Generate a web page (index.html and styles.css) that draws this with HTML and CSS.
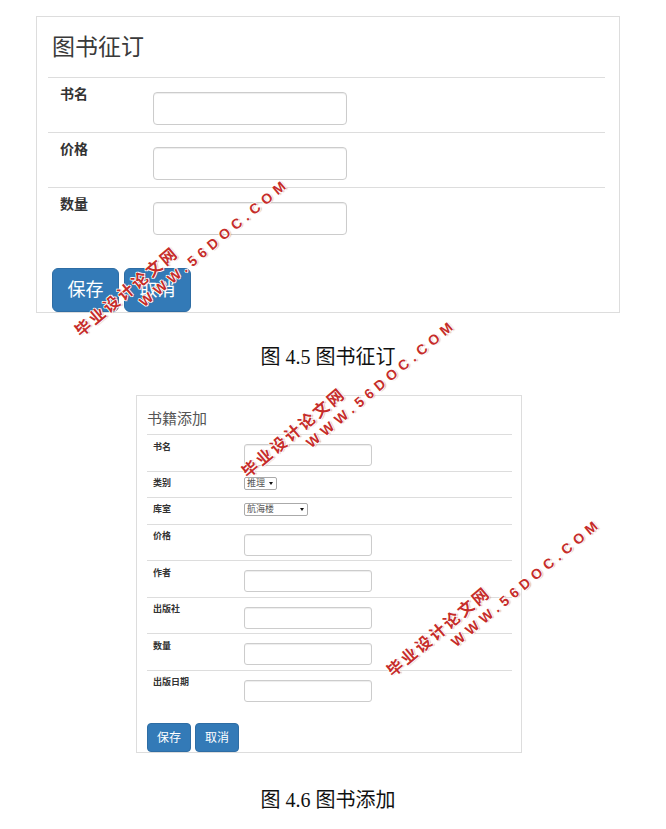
FILE: index.html
```html
<!DOCTYPE html>
<html lang="zh-CN">
<head>
<meta charset="utf-8">
<title>图书征订 / 图书添加</title>
<link rel="stylesheet" href="styles.css">
</head>
<body>
<div class="page">
  <section class="panel lg">
    <h3 class="title">图书征订</h3>
    <div class="row"><div class="label">书名</div><div class="control"><input class="input" type="text"></div></div>
    <div class="row"><div class="label">价格</div><div class="control"><input class="input" type="text"></div></div>
    <div class="row"><div class="label">数量</div><div class="control"><input class="input" type="text"></div></div>
    <div class="actions"><button class="btn" type="button">保存</button><button class="btn" type="button">取消</button></div>
  </section>
  <p class="caption caption1">图 4.5 图书征订</p>

  <section class="panel sm">
    <h3 class="title">书籍添加</h3>
    <div class="row"><div class="label">书名</div><div class="control"><input class="input" type="text"></div></div>
    <div class="row sel"><div class="label">类别</div><div class="control"><div class="select w-short"><span>推理</span><i class="caret"></i></div></div></div>
    <div class="row sel"><div class="label">库室</div><div class="control"><div class="select w-long"><span>航海楼</span><i class="caret"></i></div></div></div>
    <div class="row"><div class="label">价格</div><div class="control"><input class="input" type="text"></div></div>
    <div class="row"><div class="label">作者</div><div class="control"><input class="input" type="text"></div></div>
    <div class="row"><div class="label">出版社</div><div class="control"><input class="input" type="text"></div></div>
    <div class="row"><div class="label">数量</div><div class="control"><input class="input" type="text"></div></div>
    <div class="row"><div class="label">出版日期</div><div class="control"><input class="input" type="text"></div></div>
    <div class="actions"><button class="btn" type="button">保存</button><button class="btn" type="button">取消</button></div>
  </section>
  <p class="caption caption2">图 4.6 图书添加</p>

  <div class="wm wm1"><span class="wm-cn">毕业设计论文网</span><span class="wm-en">WWW.56DOC.COM</span></div>
  <div class="wm wm2"><span class="wm-cn">毕业设计论文网</span><span class="wm-en">WWW.56DOC.COM</span></div>
  <div class="wm wm3"><span class="wm-cn">毕业设计论文网</span><span class="wm-en">WWW.56DOC.COM</span></div>
</div>
</body>
</html>
```
FILE: styles.css
```css
html, body {
  margin: 0;
  padding: 0;
  background: #fff;
}
body {
  font-family: "Liberation Sans", "Noto Sans CJK SC", sans-serif;
  color: #333;
}
.page {
  position: relative;
  width: 656px;
  padding-top: 16px;
  display: flex;
  flex-direction: column;
  align-items: center;
}
.panel {
  box-sizing: border-box;
  border: 1px solid #ddd;
  background: #fff;
}
.title {
  margin: 0;
  font-weight: 400;
}
.row {
  display: flex;
  align-items: flex-start;
  border-top: 1px solid #ddd;
}
.label {
  box-sizing: border-box;
  flex: none;
  font-weight: 700;
  color: #333;
}
.input {
  display: block;
  box-sizing: border-box;
  margin: 0;
  padding: 0;
  background: #fff;
  border: 1px solid #ccc;
  box-shadow: inset 0 1px 1px rgba(0, 0, 0, 0.075);
  outline: none;
}
.actions {
  display: flex;
}
.btn {
  box-sizing: border-box;
  margin: 0;
  padding: 0;
  background: #337ab7;
  border: 1px solid #2e6da4;
  color: #fff;
  font-family: "Liberation Sans", "Noto Sans CJK SC", sans-serif;
  font-weight: 400;
}

/* large panel */
.lg {
  width: 584px;
  padding: 0 14px 0 11px;
}
.lg .title {
  padding: 19px 0 18px 4px;
  font-size: 23px;
  line-height: 23px;
  color: #3a3a3a;
}
.lg .row {
  height: 54px;
}
.lg .label {
  width: 105px;
  padding: 6px 0 0 12px;
  font-size: 14px;
  line-height: 20px;
}
.lg .input {
  margin-top: 14px;
  width: 194px;
  height: 33px;
  border-radius: 4px;
}
.lg .actions {
  gap: 5px;
  margin: 26px 0 0 4px;
}
.lg .btn {
  width: 67px;
  height: 44px;
  font-size: 18px;
  line-height: 20px;
  border-radius: 6px;
}

/* small panel */
.sm {
  width: 386px;
  margin-top: 24px;
  margin-left: 2px;
  padding: 0 9px 0 10px;
}
.sm .title {
  padding: 14.5px 0 8.5px 0;
  font-size: 15px;
  line-height: 15px;
  color: #555;
}
.sm .row {
  height: 35.5px;
}
.sm .row.sel {
  height: 25.5px;
}
.sm .label {
  width: 97px;
  padding: 5.5px 0 0 6px;
  font-size: 9px;
  line-height: 12px;
}
.sm .row.sel .label {
  padding-top: 5px;
}
.sm .input {
  margin-top: 9px;
  width: 128px;
  height: 22px;
  border-radius: 3px;
}
.select {
  box-sizing: border-box;
  margin-top: 5px;
  height: 13px;
  display: flex;
  align-items: center;
  justify-content: space-between;
  padding: 0 3px 0 2px;
  border: 1px solid #aaa;
  border-radius: 2px;
  background: #fff;
  font-size: 9px;
  line-height: 11px;
  color: #555;
}
.w-short { width: 33px; }
.w-long { width: 64px; }
.caret {
  display: block;
  width: 0;
  height: 0;
  border-left: 2px solid transparent;
  border-right: 2px solid transparent;
  border-top: 3px solid #111;
}
.sm .actions {
  gap: 4px;
  margin-top: 17px;
}
.sm .btn {
  width: 44px;
  height: 29px;
  font-size: 12px;
  line-height: 14px;
  border-radius: 4px;
}

/* captions */
.caption {
  margin: 0;
  font-family: "Liberation Serif", "Noto Sans CJK SC", serif;
  font-size: 20px;
  line-height: 28px;
  color: #111;
}
.caption1 { margin-top: 30px; }
.caption2 { margin-top: 33px; }

/* watermarks */
.wm {
  position: absolute;
  transform: rotate(-40deg);
  transform-origin: 0 0;
  white-space: nowrap;
  color: #c62d2a;
  font-weight: 700;
  pointer-events: none;
  text-shadow: 1px 0 0 #fff, -1px 0 0 #fff, 0 1px 0 #fff, 0 -1px 0 #fff,
    1px 1px 1px rgba(120, 60, 60, 0.45);
}
.wm-cn {
  display: block;
  font-family: "Noto Sans CJK SC", sans-serif;
  font-size: 16px;
  line-height: 16px;
  letter-spacing: 2.5px;
}
.wm-en {
  display: block;
  margin: 5px 0 0 68px;
  font-family: "Liberation Sans", sans-serif;
  font-size: 14px;
  line-height: 14px;
  letter-spacing: 5px;
}
.wm1 { left: 71px; top: 326px; }
.wm2 { left: 238px; top: 467px; }
.wm3 { left: 383px; top: 666px; }
```
